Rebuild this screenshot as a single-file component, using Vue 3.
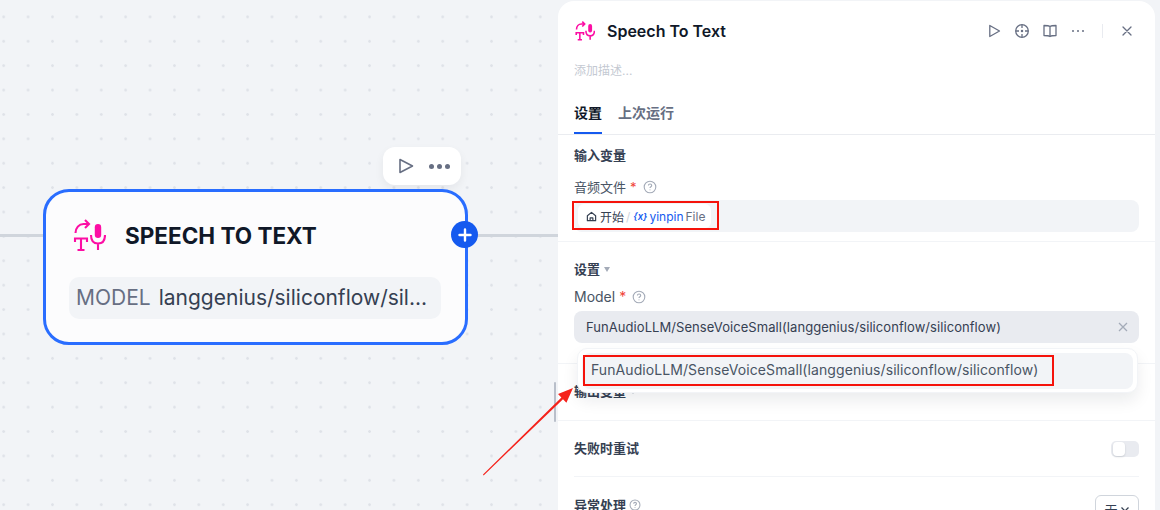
<script setup>
const modelName = 'FunAudioLLM/SenseVoiceSmall(langgenius/siliconflow/siliconflow)'
</script>

<template>
  <div class="page">
    <div class="canvas">
      <div class="wire"></div>
      <div class="toolbar">
        <svg width="20" height="20" viewBox="0 0 20 20" fill="none" stroke="#676f83" stroke-width="1.6" stroke-linejoin="round"><path d="M4 3.500 16.500 10 4 16.500Z" /></svg>
        <span class="dots"><i></i><i></i><i></i></span>
      </div>
      <div class="node">
        <div class="node-head">
          <svg class="node-icon" width="33" height="33" viewBox="13 10 33 33" fill="none" stroke="#fc0ea4" stroke-width="2.100">
            <path d="M15 33v-3.500h12v3.500M21 29.500V41M17.500 41h7M15.500 24c0-5 3.500-9 8-9h5.500M25 11l4 4-4 4" />
            <rect x="34.800" y="15" width="6.400" height="14" rx="3.200" fill="#fc0ea4" stroke="none" />
            <path d="M31 26c0 6 3 8.500 7 8.500s7-2.500 7-8.500M38 34.500V41" />
          </svg>
          <span class="node-title">SPEECH TO TEXT</span>
        </div>
        <div class="node-model"><span class="model-key">MODEL</span><span class="model-val">langgenius/siliconflow/sil...</span></div>
        <div class="plus">
          <svg width="14" height="14" viewBox="0 0 14 14" stroke="#fff" stroke-width="2.400" stroke-linecap="round"><path d="M7 1.500v11M1.500 7h11" /></svg>
        </div>
      </div>
      <div class="handle"></div>
    </div>

    <aside class="panel">
      <header class="head">
        <svg width="20" height="20" viewBox="13 10 33 33" fill="none" stroke="#fc0ea4" stroke-width="2.600">
          <path d="M15 33v-3.500h12v3.500M21 29.500V41M17.500 41h7M15.500 24c0-5 3.500-9 8-9h5.500M25 11l4 4-4 4" />
          <rect x="34.800" y="15" width="6.400" height="14" rx="3.200" fill="#fc0ea4" stroke="none" />
          <path d="M31 26c0 6 3 8.500 7 8.500s7-2.500 7-8.500M38 34.500V41" />
        </svg>
        <h1 class="title">Speech To Text</h1>
        <div class="head-tools">
          <svg width="16" height="16" viewBox="0 0 16 16" fill="none" stroke="#676f83" stroke-width="1.300" stroke-linejoin="round"><path d="M3.800 2.500 13.500 8l-9.700 5.500Z" /></svg>
          <svg width="16" height="16" viewBox="0 0 16 16" fill="none" stroke="#676f83" stroke-width="1.300"><circle cx="8" cy="8" r="6.300" /><path d="M8 1.700v3.300M8 11v3.300M1.700 8H5M11 8h3.300" /><circle cx="8" cy="8" r=".6" fill="#676f83" /></svg>
          <svg width="16" height="16" viewBox="0 0 16 16" fill="none" stroke="#676f83" stroke-width="1.300" stroke-linejoin="round"><path d="M8 3.500C7 2.700 5.500 2.500 2 2.500v10c3.500 0 5 .2 6 1 1-.8 2.500-1 6-1v-10c-3.500 0-5 .2-6 1ZM8 3.500v10" /></svg>
          <span class="dots small"><i></i><i></i><i></i></span>
          <span class="sep"></span>
          <svg width="16" height="16" viewBox="0 0 16 16" fill="none" stroke="#676f83" stroke-width="1.300" stroke-linecap="round"><path d="m4 4 8 8M12 4l-8 8" /></svg>
        </div>
      </header>
      <p class="desc">添加描述...</p>
      <nav class="tabs">
        <span class="tab active">设置</span>
        <span class="tab">上次运行</span>
      </nav>

      <section class="sec sec-input">
        <div class="sec-title">输入变量</div>
        <div class="label">音频文件 <b>*</b>
          <svg class="help" width="14" height="14" viewBox="0 0 14 14" fill="none" stroke="#a4abb8" stroke-width="1.100"><circle cx="7" cy="7" r="5.800" /><path d="M5.400 5.500c0-2.100 3.300-2.100 3.300 0 0 1.300-1.700 1.200-1.700 2.600M7 9.400v.9" /></svg>
        </div>
        <div class="field var-field">
          <span class="var-chip">
            <svg width="11" height="11" viewBox="0 0 12 12" fill="none" stroke="#354052" stroke-width="1.300" stroke-linejoin="round"><path d="M1.500 5.200 6 1.500l4.500 3.700v5.300h-9ZM4.500 10.500V7.500h3v3" /></svg>
            <span class="v-node">开始</span><span class="v-slash">/</span><span class="v-x">{x}</span><span class="v-name">yinpin</span><span class="v-type">File</span>
          </span>
        </div>
      </section>

      <section class="sec sec-settings">
        <div class="sec-title">设置 <span class="caret"></span></div>
        <div class="label model-label">Model <b>*</b>
          <svg class="help" width="14" height="14" viewBox="0 0 14 14" fill="none" stroke="#a4abb8" stroke-width="1.100"><circle cx="7" cy="7" r="5.800" /><path d="M5.400 5.500c0-2.100 3.300-2.100 3.300 0 0 1.300-1.700 1.200-1.700 2.600M7 9.400v.9" /></svg>
        </div>
        <div class="field select">
          <span>{{ modelName }}</span>
          <svg width="12" height="12" viewBox="0 0 12 12" stroke="#a4abb8" stroke-width="1.300"><path d="m2 2 8 8M10 2l-8 8" /></svg>
        </div>
        <div class="dropdown">
          <div class="option">{{ modelName }}</div>
        </div>
      </section>

      <section class="sec sec-output">
        <div class="sec-title">输出变量 <span class="caret"></span></div>
      </section>

      <section class="sec-row">
        <div class="row-inner retry">
          <span class="row-label">失败时重试</span>
          <span class="switch"><i></i></span>
        </div>
        <div class="row-inner error">
          <span class="row-label">异常处理
            <svg class="help" width="12" height="12" viewBox="0 0 14 14" fill="none" stroke="#a4abb8" stroke-width="1.200"><circle cx="7" cy="7" r="5.800" /><path d="M5.400 5.500c0-2.100 3.300-2.100 3.300 0 0 1.300-1.700 1.200-1.700 2.600M7 9.400v.9" /></svg>
          </span>
          <span class="none-btn">无
            <svg width="10" height="10" viewBox="0 0 10 10" fill="none" stroke="#354052" stroke-width="1.300"><path d="m1.500 3.500 3.500 3.500 3.500-3.500" /></svg>
          </span>
        </div>
      </section>
    </aside>

    <div class="mark mark-a"></div>
    <div class="mark mark-b"></div>
    <svg class="arrow" width="110" height="110" viewBox="0 0 110 110">
      <path d="M3 103.400 3.600 104.400 83 28.300 86.400 31.700 93 17 78 23.100 81.400 26.500Z" fill="#f5221b" />
    </svg>
  </div>
</template>

<style>
html, body { margin: 0; padding: 0; }
</style>

<style scoped>
.page {
  position: relative;
  display: flex;
  width: 1160px;
  height: 510px;
  overflow: hidden;
  background-color: #f2f4f7;
  background-image: radial-gradient(circle, #dfe2e8 1.200px, transparent 1.500px);
  background-size: 24.400px 24.400px;
  background-position: 15.900px 4.700px;
  font-family: Inter, "Noto Sans CJK SC", sans-serif;
  color: #354052;
}
.canvas { position: relative; width: 558px; flex: none; }
.wire { position: absolute; left: 0; right: 0; top: 234px; height: 3px; background: #d0d5dc; }
.toolbar {
  position: absolute; left: 383px; top: 147px; width: 78px; height: 38px;
  display: flex; align-items: center; justify-content: center; gap: 13px; box-sizing: border-box;
  padding-left: 2px;
  background: #fff; border-radius: 12px; box-shadow: 0 4px 10px rgba(16, 24, 40, .06);
}
.dots { display: inline-flex; gap: 3px; }
.dots i { width: 5px; height: 5px; border-radius: 50%; background: #676f83; }
.dots.small { gap: 2.500px; width: 16px; justify-content: center; }
.dots.small i { width: 2.500px; height: 2.500px; }
.node {
  position: absolute; left: 43px; top: 189px; width: 425px; height: 156px; box-sizing: border-box;
  background: #fcfcfd; border: 3px solid #296dff; border-radius: 26px;
  padding: 27px 24px 0 23px;
}
.node-head { display: flex; align-items: center; gap: 19px; margin-left: 4px; height: 33px; }
.node-icon { flex: none; }
.node-title { font-size: 22.500px; font-weight: 700; color: #101828; white-space: nowrap; }
.node-model {
  margin-top: 25px; height: 42px; box-sizing: border-box; padding: 0 0 1px 7px; border-radius: 10px; background: #f2f4f7;
  display: flex; align-items: center; gap: 8px; font-size: 21px; white-space: nowrap;
}
.model-key { color: #676f83; }
.model-val { color: #354052; }
.plus {
  position: absolute; right: -13px; top: 29px; width: 27px; height: 27px; border-radius: 50%;
  background: #155aef; display: flex; align-items: center; justify-content: center;
}
.handle { position: absolute; left: 554px; top: 382px; width: 2px; height: 40px; background: #b9bfca; border-radius: 1px; }
.panel {
  margin-top: 1px; width: 597px; flex: none; height: 560px; box-sizing: border-box;
  background: #fff; border-radius: 16px 16px 0 0;
}
.head { display: flex; align-items: center; height: 30px; margin-top: 15px; padding: 0 20px 0 17px; }
.title { margin: 0 0 0 12px; font-size: 16px; font-weight: 600; color: #101828; }
.head-tools { margin-left: auto; display: flex; align-items: center; gap: 12px; }
.sep { width: 1px; height: 14px; background: #e9ebf0; margin: 0 4px; }
.desc { margin: 15px 0 0 16px; font-size: 12px; line-height: 20px; color: #c4c9d2; }
.tabs { display: flex; gap: 16px; height: 38px; margin-top: 15px; padding-left: 16px; border-bottom: 1px solid #eaecf0; }
.tab { font-size: 14px; font-weight: 600; color: #676f83; line-height: 30px; height: 38px; box-sizing: border-box; padding-top: 2px; }
.tab.active { color: #101828; border-bottom: 2px solid #155aef; }
.sec { padding: 0 16px; }
.sec-input { height: 107px; border-bottom: 1px solid #f2f4f7; box-sizing: border-box; padding-top: 10px; }
.sec-title { font-size: 13px; font-weight: 600; color: #354052; line-height: 20px; display: flex; align-items: center; gap: 4px; }
.label { font-size: 13px; line-height: 18px; color: #495464; margin-top: 13px; display: flex; align-items: center; gap: 4px; }
.label b { color: #f04438; font-weight: 400; }
.help { margin-left: 2px; }
.field { height: 32px; border-radius: 8px; background: #f2f4f7; display: flex; align-items: center; }
.var-field { margin-top: 4px; padding-left: 4px; }
.var-chip {
  display: inline-flex; align-items: center; height: 24px; padding: 0 6px 0 8px; border-radius: 6px; background: #fff;
  font-size: 12px; white-space: nowrap;
}
.v-node { margin-left: 3px; color: #354052; }
.v-slash { margin: 0 3px 0 2px; color: #d0d5dc; }
.v-x { color: #155aef; font-weight: 600; font-style: italic; font-size: 9.500px; }
.v-name { margin-left: 2px; color: #155aef; font-weight: 400; }
.v-type { margin-left: 2px; color: #676f83; }
.sec-settings { position: relative; height: 122px; box-sizing: border-box; padding-top: 17px; border-bottom: 1px solid #f2f4f7; }
.caret { width: 0; height: 0; border: 3.500px solid transparent; border-top: 5px solid #a4abb8; border-bottom: 0; }
.model-label { font-size: 14px; margin-top: 9px; }
.select { margin-top: 5px; background: #e9ebf0; padding: 0 10px 0 12px; justify-content: space-between; font-size: 13px; letter-spacing: .065px; color: #354052; white-space: nowrap; }
.dropdown {
  position: absolute; left: 19px; top: 106px; width: 561px; height: 45px; box-sizing: border-box;
  padding: 4px; background: #fff; border: 1px solid #f2f4f7; border-radius: 10px;
  box-shadow: 0 8px 16px rgba(16, 24, 40, .08); z-index: 2;
}
.option {
  height: 36px; line-height: 34px; padding-left: 9px; border-radius: 8px; background: #f2f4f7;
  font-size: 14px; letter-spacing: .08px; color: #495464; white-space: nowrap;
}
.sec-output { height: 57px; box-sizing: border-box; padding-top: 17px; border-bottom: 1px solid #f2f4f7; }
.sec-row { padding: 0 16px; }
.row-inner { display: flex; justify-content: space-between; }
.retry { height: 56px; box-sizing: border-box; align-items: center; padding-bottom: 2px; border-bottom: 1px solid #f2f4f7; }
.retry .switch { margin-top: 2px; }
.error { height: 33px; align-items: flex-start; padding-top: 18px; box-sizing: border-box; }
.row-label { font-size: 13px; font-weight: 600; color: #354052; display: inline-flex; align-items: center; gap: 1px; line-height: 20px; }
.switch { width: 28px; height: 16px; border-radius: 5px; background: #e9ebf0; padding: 1px 2px; box-sizing: border-box; }
.switch i { display: block; width: 12px; height: 14px; border-radius: 4px; background: #fff; box-shadow: 0 1px 2px rgba(16, 24, 40, .15); }
.none-btn {
  width: 44px; height: 28px; box-sizing: border-box; border: 1px solid #d0d5dc; border-radius: 6px; background: #fff;
  display: inline-flex; align-items: center; justify-content: center; gap: 2px; font-size: 13px; color: #354052;
}
.mark { position: absolute; border: 2px solid #f5130b; box-sizing: border-box; z-index: 3; }
.mark-a { left: 572px; top: 201px; width: 147px; height: 29px; }
.mark-b { left: 583px; top: 355px; width: 471px; height: 31px; }
.arrow { position: absolute; left: 480px; top: 371px; z-index: 3; }
</style>
